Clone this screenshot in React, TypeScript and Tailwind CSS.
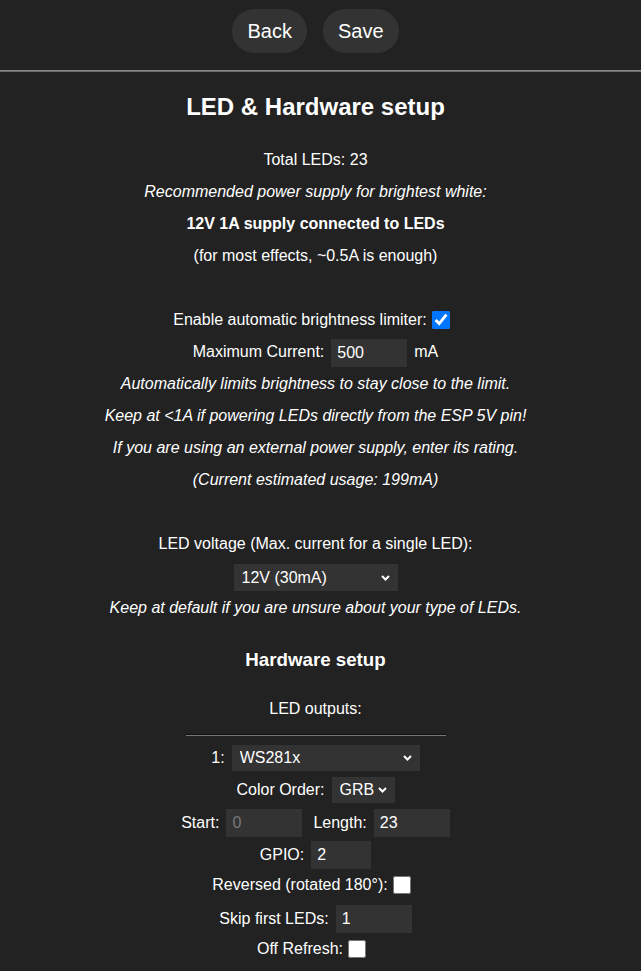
import React from "react";

const font = { fontFamily: '"Liberation Sans", Arial, sans-serif' };

function Chevron() {
  return (
    <svg
      className="pointer-events-none absolute right-[8px] top-1/2 -translate-y-1/2"
      width="9"
      height="6"
      viewBox="0 0 9 6"
      fill="none"
    >
      <path d="M1 1l3.5 3.5L8 1" stroke="#fff" strokeWidth="2" />
    </svg>
  );
}

function Select({ value, w }: { value: string; w: string }) {
  return (
    <span className={`relative inline-block ${w}`}>
      <select
        defaultValue={value}
        className="block h-[26px] w-full appearance-none bg-[#333] pl-[8px] pr-[19px] text-white outline-none"
      >
        <option>{value}</option>
      </select>
      <Chevron />
    </span>
  );
}

function Field({ value, w = "w-[76px]", dim = false }: { value: string; w?: string; dim?: boolean }) {
  return (
    <input
      type="text"
      defaultValue={value}
      className={`h-[28px] ${w} bg-[#333] px-[6px] outline-none ${dim ? "text-[#777]" : "text-white"}`}
    />
  );
}

function Row({ children, className = "" }: { children: React.ReactNode; className?: string }) {
  return <div className={`flex h-8 items-center justify-center ${className}`}>{children}</div>;
}

export default function App() {
  return (
    <div className="min-h-[971px] bg-[#222] pr-[10px] text-[16px] text-white" style={font}>
      <div className="flex h-[70px] items-center justify-center gap-4 pb-[8px] pr-[-1px]">
        <button className="h-[44px] rounded-[24px] bg-[#333] px-[15px] text-[20px]">Back</button>
        <button className="h-[44px] rounded-[24px] bg-[#333] px-[15px] text-[20px]">Save</button>
      </div>
      <div className="-mr-[10px] h-px bg-[#8a8a8a]" />
      <div className="-mr-[10px] h-px bg-[#6a6a6a]" />

      <h2 className="flex h-[72px] items-center justify-center pb-[3px] text-[24px] font-bold">LED &amp; Hardware setup</h2>

      <div className="flex flex-col">
        <Row>Total LEDs: 23</Row>
        <Row className="italic">Recommended power supply for brightest white:</Row>
        <Row className="font-bold">12V 1A supply connected to LEDs</Row>
        <Row>(for most effects, ~0.5A is enough)</Row>
        <Row> </Row>
        <Row className="pb-[1px]">
          Enable automatic brightness limiter:
          <input type="checkbox" defaultChecked className="ml-[5px] mr-[8px] h-[18px] w-[18px]" />
        </Row>
        <Row>
          Maximum Current:
          <span className="ml-[7px] mt-[2px]">
            <Field value="500" />
          </span>
          <span className="ml-[7px]">mA</span>
        </Row>
        <Row className="italic">Automatically limits brightness to stay close to the limit.</Row>
        <Row className="italic">Keep at &lt;1A if powering LEDs directly from the ESP 5V pin!</Row>
        <Row className="italic">If you are using an external power supply, enter its rating.</Row>
        <Row className="italic">(Current estimated usage: 199mA)</Row>
        <Row> </Row>
        <Row>LED voltage (Max. current for a single LED):</Row>
        <Row className="pt-[3px]">
          <span className="relative inline-block w-[164px]">
            <select
              defaultValue="12V (30mA)"
              className="block h-[27px] w-full appearance-none bg-[#333] pl-[8px] pr-[22px] text-white outline-none"
            >
              <option>12V (30mA)</option>
            </select>
            <Chevron />
          </span>
        </Row>
        <Row className="italic">Keep at default if you are unsure about your type of LEDs.</Row>

        <h3 className="flex h-[72px] items-center justify-center text-[18.72px] font-bold">Hardware setup</h3>
        <div className="flex h-[26px] items-center justify-center">LED outputs:</div>
        <div className="flex justify-center pt-[12px]">
          <div className="w-[260px] border-t border-b border-t-[#111] border-b-[#777]" />
        </div>

        <div className="flex flex-col pt-[6px]">
          <Row>
            <span className="mr-[7px]">1:</span>
            <Select value="WS281x" w="w-[188px]" />
          </Row>
          <Row>
            <span className="mr-[7px]">Color Order:</span>
            <Select value="GRB" w="w-[63px]" />
          </Row>
          <Row className="pt-[2px]">
            <span className="mr-[7px]">Start:</span>
            <Field value="0" dim />
            <span className="ml-[11px] mr-[7px]">Length:</span>
            <Field value="23" />
          </Row>
          <Row className="pt-[2px]">
            <span className="mr-[7px]">GPIO:</span>
            <Field value="2" w="w-[60px]" />
          </Row>
          <Row className="h-[30px]">
            Reversed (rotated 180°):
            <input type="checkbox" className="ml-[5px] mr-[8px] h-[18px] w-[18px]" />
          </Row>
          <Row className="h-[36px] pt-[2px]">
            <span className="mr-[7px]">Skip first LEDs:</span>
            <Field value="1" />
          </Row>
          <Row className="h-[26px]">
            Off Refresh:
            <input type="checkbox" className="ml-[5px] mr-[8px] h-[18px] w-[18px]" />
          </Row>
        </div>
      </div>
    </div>
  );
}
